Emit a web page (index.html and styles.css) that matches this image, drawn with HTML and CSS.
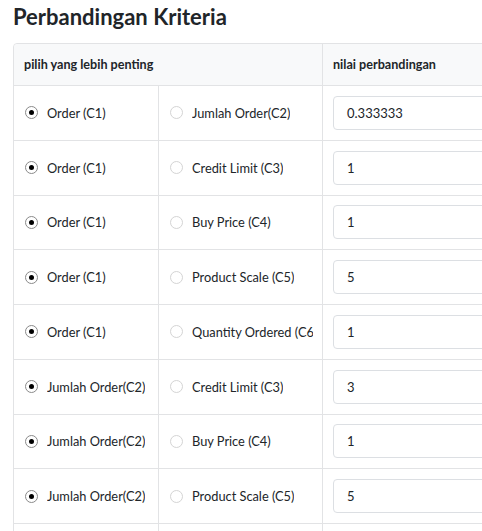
FILE: index.html
```html
<!DOCTYPE html>
<html>
<head>
<meta charset="utf-8">
<link rel="stylesheet" href="styles.css">
</head>
<body>
<div class="page">
  <h1 class="title">Perbandingan Kriteria</h1>
  <div class="table">
    <div class="row head">
      <div class="cell span2">pilih yang lebih penting</div>
      <div class="cell c3">nilai perbandingan</div>
    </div>
    <div class="row">
      <div class="cell c1"><span class="radio on"></span><span class="lbl">Order (C1)</span></div>
      <div class="cell c2"><span class="radio"></span><span class="lbl">Jumlah Order(C2)</span></div>
      <div class="cell c3"><div class="input">0.333333</div></div>
    </div>
    <div class="row">
      <div class="cell c1"><span class="radio on"></span><span class="lbl">Order (C1)</span></div>
      <div class="cell c2"><span class="radio"></span><span class="lbl">Credit Limit (C3)</span></div>
      <div class="cell c3"><div class="input">1</div></div>
    </div>
    <div class="row">
      <div class="cell c1"><span class="radio on"></span><span class="lbl">Order (C1)</span></div>
      <div class="cell c2"><span class="radio"></span><span class="lbl">Buy Price (C4)</span></div>
      <div class="cell c3"><div class="input">1</div></div>
    </div>
    <div class="row">
      <div class="cell c1"><span class="radio on"></span><span class="lbl">Order (C1)</span></div>
      <div class="cell c2"><span class="radio"></span><span class="lbl">Product Scale (C5)</span></div>
      <div class="cell c3"><div class="input">5</div></div>
    </div>
    <div class="row">
      <div class="cell c1"><span class="radio on"></span><span class="lbl">Order (C1)</span></div>
      <div class="cell c2"><span class="radio"></span><span class="lbl">Quantity Ordered (C6)</span></div>
      <div class="cell c3"><div class="input">1</div></div>
    </div>
    <div class="row">
      <div class="cell c1"><span class="radio on"></span><span class="lbl">Jumlah Order(C2)</span></div>
      <div class="cell c2"><span class="radio"></span><span class="lbl">Credit Limit (C3)</span></div>
      <div class="cell c3"><div class="input">3</div></div>
    </div>
    <div class="row">
      <div class="cell c1"><span class="radio on"></span><span class="lbl">Jumlah Order(C2)</span></div>
      <div class="cell c2"><span class="radio"></span><span class="lbl">Buy Price (C4)</span></div>
      <div class="cell c3"><div class="input">1</div></div>
    </div>
    <div class="row">
      <div class="cell c1"><span class="radio on"></span><span class="lbl">Jumlah Order(C2)</span></div>
      <div class="cell c2"><span class="radio"></span><span class="lbl">Product Scale (C5)</span></div>
      <div class="cell c3"><div class="input">5</div></div>
    </div>
    <div class="row">
      <div class="cell c1"></div>
      <div class="cell c2"></div>
      <div class="cell c3"></div>
    </div>
  </div>
</div>
</body>
</html>
```
FILE: styles.css
```css
html, body {
  margin: 0;
  padding: 0;
  background: #fff;
  overflow: hidden;
}
.page {
  width: 482px;
  height: 531px;
  overflow: hidden;
  padding-left: 13px;
  box-sizing: border-box;
  font-family: Lato, "Liberation Sans", sans-serif;
  color: #212529;
}
.title {
  margin: 0;
  padding-top: 4px;
  height: 43px;
  box-sizing: border-box;
  font-size: 22px;
  font-weight: 700;
  line-height: 26px;
}
.table {
  width: 620px;
  border: 1px solid #e2e3e5;
  border-radius: 4px;
}
.row {
  display: grid;
  grid-template-columns: 145px 164px 1fr;
  height: 54.75px;
  border-top: 1px solid #e2e3e5;
  box-sizing: border-box;
}
.row.head {
  height: 41px;
  border-top: none;
  background: #f8f9fa;
  font-weight: 700;
  border-radius: 4px 4px 0 0;
}
.cell {
  display: flex;
  align-items: center;
  padding-left: 11px;
  overflow: hidden;
  white-space: nowrap;
  font-size: 12.8px;
}
.head .cell {
  font-size: 12.6px;
}
.span2 {
  grid-column: 1 / 3;
  padding-left: 10px;
  border-right: 1px solid #e2e3e5;
}
.c1 {
  border-right: 1px solid #e2e3e5;
}
.c2 {
  border-right: 1px solid #e2e3e5;
  padding-right: 9px;
}
.c3 {
  padding-left: 10px;
}
.radio {
  flex: none;
  width: 13px;
  height: 13px;
  border-radius: 50%;
  border: 1px solid #d4d4d4;
  box-sizing: border-box;
  margin-right: 9px;
  position: relative;
  background: #fff;
}
.radio.on {
  border-color: #8a8a8a;
}
.radio.on::after {
  content: "";
  position: absolute;
  left: 3px;
  top: 3px;
  width: 5px;
  height: 5px;
  border-radius: 50%;
  background: #000;
}
.lbl {
  overflow: hidden;
}
.input {
  width: 100%;
  height: 34px;
  border: 1px solid #dcdfe3;
  border-radius: 4px;
  box-sizing: border-box;
  padding-left: 13px;
  display: flex;
  align-items: center;
  font-size: 13px;
}
```
